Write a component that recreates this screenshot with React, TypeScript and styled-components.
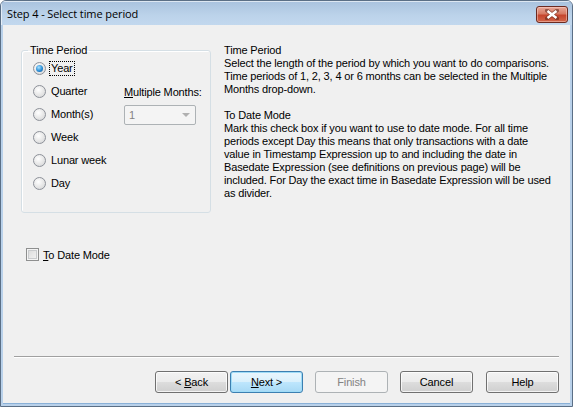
import React, { FunctionComponent } from 'react';
import styled, { createGlobalStyle, css } from 'styled-components';

const GlobalStyle = createGlobalStyle`
  html, body {
    margin: 0;
    padding: 0;
    background: #ffffff;
  }
  body {
    font-family: 'Liberation Sans', Arial, sans-serif;
    font-size: 11px;
    letter-spacing: -0.15px;
    color: #000000;
  }
`;

const periods = ['Year', 'Quarter', 'Month(s)', 'Week', 'Lunar week', 'Day'];

const helpParagraphs = [
  {
    title: 'Time Period',
    lines: [
      'Select the length of the period by which you want to do comparisons.',
      'Time periods of 1, 2, 3, 4 or 6 months can be selected in the Multiple',
      'Months drop-down.',
    ],
  },
  {
    title: 'To Date Mode',
    lines: [
      'Mark this check box if you want to use to date mode. For all time',
      'periods except Day this means that only transactions with a date',
      'value in Timestamp Expression up to and including the date in',
      'Basedate Expression (see definitions on previous page) will be',
      'included. For Day the exact time in Basedate Expression will be used',
      'as divider.',
    ],
  },
];

const Window = styled.div`
  width: 573px;
  height: 407px;
  box-sizing: border-box;
  border: 1px solid #5b6f86;
  border-radius: 6px 6px 0 0;
  background: #b9d1ea;
  display: flex;
  flex-direction: column;
  overflow: hidden;
`;

const TitleBar = styled.div`
  height: 24px;
  flex: none;
  display: flex;
  align-items: center;
  justify-content: space-between;
  padding: 0 4px 0 6px;
  background: linear-gradient(#a9c2de, #bcd3ea 60%, #c2d8ee);
  box-shadow: inset 1px 1px 0 rgba(255, 255, 255, 0.6);
`;

const TitleText = styled.span`
  font-family: 'Open Sans', 'Noto Sans', sans-serif;
  font-size: 11px;
  letter-spacing: -0.1px;
  color: #000000;
  margin-top: 1px;
`;

const CloseButton = styled.div`
  width: 32px;
  height: 17px;
  margin-top: 2px;
  box-sizing: border-box;
  border: 1px solid #6c2a20;
  border-radius: 3px;
  background: linear-gradient(#e8a898, #d77a63 45%, #c5452d 55%, #d2664a);
  box-shadow: inset 0 0 0 1px rgba(255, 220, 210, 0.45);
  display: flex;
  align-items: center;
  justify-content: center;
`;

const Content = styled.div`
  flex: 1;
  margin: 0 2px 2px 2px;
  background: #f0f0f0;
  display: flex;
  flex-direction: column;
  border-bottom: 1px solid #8ab1d8;
`;

const Main = styled.div`
  display: flex;
  gap: 13px;
  padding: 19px 0 0 18px;
`;

const LeftColumn = styled.div`
  width: 190px;
  display: flex;
  flex-direction: column;
`;

const GroupBox = styled.fieldset`
  margin: 0;
  padding: 0 0 17px 0;
  width: 190px;
  box-sizing: border-box;
  border: 1px solid #d5dfe5;
  border-radius: 3px;
  display: flex;
  box-shadow: inset 1px 1px 0 #ffffff;
`;

const Legend = styled.legend`
  margin-left: 6px;
  padding: 0 2px;
  line-height: 13px;
`;

const RadioList = styled.div`
  display: flex;
  flex-direction: column;
  padding-left: 11px;
  width: 91px;
`;

const RadioRow = styled.label`
  height: 23px;
  display: flex;
  align-items: center;
  gap: 3px;
`;

const RadioDot = styled.span<{ checked?: boolean }>`
  width: 13px;
  height: 13px;
  box-sizing: border-box;
  border-radius: 50%;
  border: 1px solid #8d9199;
  background: radial-gradient(circle at 40% 35%, #ffffff, #e6e6e6 55%, #cfd1d4);
  display: flex;
  align-items: center;
  justify-content: center;
  flex: none;

  ${({ checked }) =>
    checked &&
    css`
      &::after {
        content: '';
        width: 7px;
        height: 7px;
        border-radius: 50%;
        background: radial-gradient(circle at 40% 35%, #a8e1ff, #2a8ed6 55%, #0b4f92);
      }
    `}
`;

const RadioLabel = styled.span<{ focused?: boolean }>`
  padding: 0 1px;
  line-height: 13px;
  border: 1px dotted ${({ focused }) => (focused ? '#000000' : 'transparent')};
`;

const MonthsPanel = styled.div`
  display: flex;
  flex-direction: column;
  padding-top: 23px;
`;

const MonthsLabel = styled.div`
  height: 23px;
  display: flex;
  align-items: center;
`;

const Underline = styled.span`
  text-decoration: underline;
`;

const Select = styled.div`
  margin-top: 2px;
  width: 72px;
  height: 20px;
  box-sizing: border-box;
  border: 1px solid #adb2b5;
  border-radius: 2px;
  background: #f4f4f4;
  display: flex;
  align-items: center;
  justify-content: space-between;
  padding: 0 5px 0 4px;
  color: #838383;
`;

const Arrow = styled.span`
  width: 0;
  height: 0;
  border-left: 4px solid transparent;
  border-right: 4px solid transparent;
  border-top: 4px solid #b0b0b0;
`;

const CheckRow = styled.label`
  margin: 35px 0 0 5px;
  display: flex;
  align-items: center;
  gap: 4px;
`;

const CheckBox = styled.span`
  width: 13px;
  height: 13px;
  box-sizing: border-box;
  border: 1px solid #8e8f8f;
  background: linear-gradient(135deg, #d8d8d8, #f6f6f6);
  box-shadow: inset 0 0 0 1px #f4f4f4, inset 0 0 0 2px #c9cbcd;
`;

const HelpText = styled.div`
  display: flex;
  flex-direction: column;
  gap: 13px;
  line-height: 13px;
`;

const Paragraph = styled.p`
  margin: 0;
  white-space: nowrap;
`;

const Footer = styled.div`
  margin-top: auto;
  padding: 0 11px 10px 11px;
`;

const Separator = styled.div`
  height: 1px;
  background: #a0a0a0;
  border-bottom: 1px solid #ffffff;
`;

const ButtonRow = styled.div`
  display: flex;
  justify-content: flex-end;
  padding: 13px 0 0 0;
`;

type ButtonProps = {
  variant?: 'default' | 'disabled';
  gap?: number;
};

const Button = styled.div<ButtonProps>`
  width: 73px;
  height: 22px;
  box-sizing: border-box;
  margin-left: ${({ gap }) => (gap !== undefined ? gap : 13)}px;
  border: 1px solid #707070;
  border-radius: 3px;
  background: linear-gradient(#f2f2f2, #ebebeb 50%, #dddddd 51%, #cfcfcf);
  box-shadow: inset 0 0 0 1px rgba(255, 255, 255, 0.75);
  display: flex;
  align-items: center;
  justify-content: center;

  ${({ variant }) =>
    variant === 'default' &&
    css`
      border-color: #3c7fb1;
      background: linear-gradient(#eaf6fd, #d9f0fc 50%, #bee6fd 51%, #a7d9f5);
      box-shadow: inset 0 0 0 1px #9fdcf7;
    `}

  ${({ variant }) =>
    variant === 'disabled' &&
    css`
      border-color: #adb2b5;
      background: #f4f4f4;
      box-shadow: none;
      color: #838383;
    `}
`;

const App: FunctionComponent = () => {
  return (
    <>
      <GlobalStyle />
      <Window>
        <TitleBar>
          <TitleText>Step 4 - Select time period</TitleText>
          <CloseButton>
            <svg width='14' height='11' viewBox='0 0 14 11'>
              <path
                d='M2 1.5 L12 9.5 M12 1.5 L2 9.5'
                stroke='#5a2318'
                strokeWidth='4'
                strokeLinecap='square'
                opacity='0.55'
              />
              <path d='M2.5 2 L11.5 9 M11.5 2 L2.5 9' stroke='#ffffff' strokeWidth='2.4' />
            </svg>
          </CloseButton>
        </TitleBar>
        <Content>
          <Main>
            <LeftColumn>
              <GroupBox>
                <Legend>Time Period</Legend>
                <RadioList>
                  {periods.map((p, i) => (
                    <RadioRow key={p}>
                      <RadioDot checked={i === 0} />
                      <RadioLabel focused={i === 0}>{p}</RadioLabel>
                    </RadioRow>
                  ))}
                </RadioList>
                <MonthsPanel>
                  <MonthsLabel>
                    <span>
                      <Underline>M</Underline>ultiple Months:
                    </span>
                  </MonthsLabel>
                  <Select>
                    <span>1</span>
                    <Arrow />
                  </Select>
                </MonthsPanel>
              </GroupBox>
              <CheckRow>
                <CheckBox />
                <span>
                  <Underline>T</Underline>o Date Mode
                </span>
              </CheckRow>
            </LeftColumn>
            <HelpText>
              {helpParagraphs.map((para) => (
                <Paragraph key={para.title}>
                  {para.title}
                  {para.lines.map((line) => (
                    <React.Fragment key={line}>
                      <br />
                      {line}
                    </React.Fragment>
                  ))}
                </Paragraph>
              ))}
            </HelpText>
          </Main>
          <Footer>
            <Separator />
            <ButtonRow>
              <Button>
                &lt;&nbsp;<Underline>B</Underline>ack
              </Button>
              <Button variant='default' gap={2}>
                <Underline>N</Underline>ext &gt;
              </Button>
              <Button variant='disabled' gap={12}>Finish</Button>
              <Button gap={12}>Cancel</Button>
              <Button>Help</Button>
            </ButtonRow>
          </Footer>
        </Content>
      </Window>
    </>
  );
};

export default App;
